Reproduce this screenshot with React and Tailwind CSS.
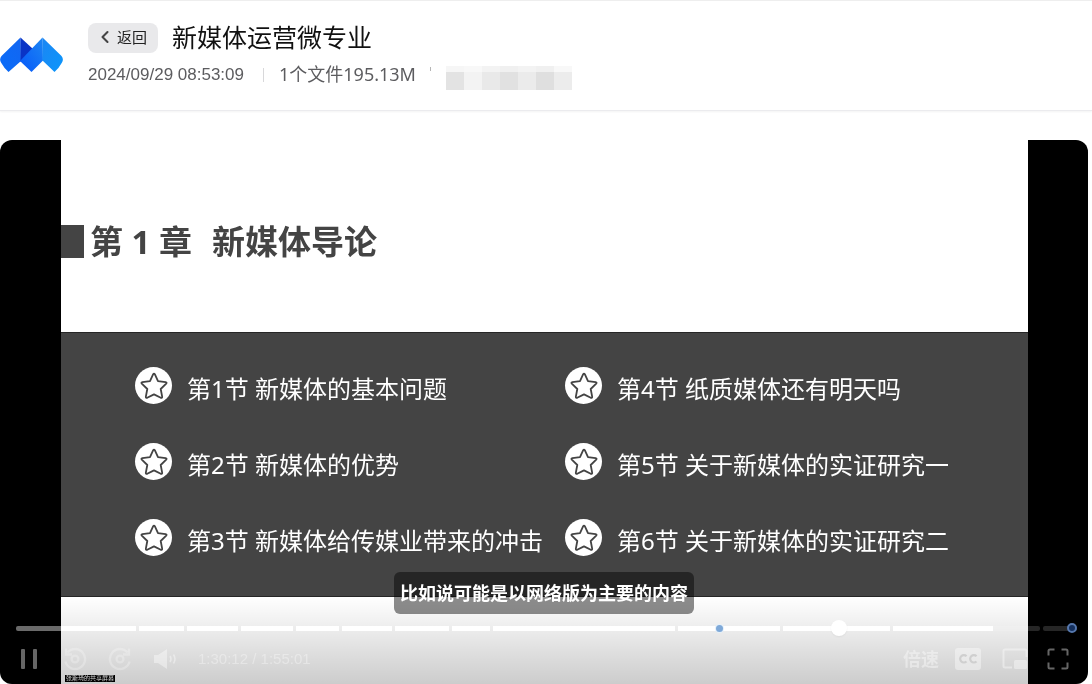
import React, { useState } from 'react';
import { ChevronLeft } from 'lucide-react';

// --- Data ---
const lessonsLeft = [
    '第1节 新媒体的基本问题',
    '第2节 新媒体的优势',
    '第3节 新媒体给传媒业带来的冲击',
];

const lessonsRight = [
    '第4节 纸质媒体还有明天吗',
    '第5节 关于新媒体的实证研究一',
    '第6节 关于新媒体的实证研究二',
];

// Chapter lengths on the seek bar, "played" is the buffered share
const chapters = [
    { size: 120, played: 100 },
    { size: 45, played: 100 },
    { size: 51, played: 100 },
    { size: 53, played: 100 },
    { size: 43, played: 100 },
    { size: 50, played: 100 },
    { size: 54, played: 100 },
    { size: 38, played: 100 },
    { size: 182, played: 100 },
    { size: 102, played: 100 },
    { size: 108, played: 100 },
    { size: 147, played: 68 },
    { size: 34, played: 0 },
];

const Logo = () => (
    <svg viewBox="0 0 63 36" className="w-[63px] h-9 shrink-0" aria-label="腾讯会议" role="img">
        <defs>
            <linearGradient id="logoLeft" x1="0" y1="1" x2="1" y2="0">
                <stop offset="0" stopColor="#0a6cf8" />
                <stop offset="1" stopColor="#1266f2" />
            </linearGradient>
            <linearGradient id="logoMid" x1="0" y1="1" x2="1" y2="0">
                <stop offset="0" stopColor="#0758fa" />
                <stop offset="1" stopColor="#1c86f3" />
            </linearGradient>
            <linearGradient id="logoRight" x1="0" y1="0" x2="1" y2="1">
                <stop offset="0" stopColor="#1c86f3" />
                <stop offset="1" stopColor="#0b96fb" />
            </linearGradient>
        </defs>
        <path d="M20.5 0.5 L1.5 19 Q-1 22 1 25.5 Q4 31 8.5 35 L21 24 Z" fill="url(#logoLeft)" />
        <path d="M20.5 0.5 L33 12 L20.5 25 Z" fill="#0a34c6" />
        <path d="M42.5 0.5 L20 24 L31.5 35 L43 23.5 Z" fill="url(#logoMid)" />
        <path d="M42.5 0.5 L61.5 19 Q64 22 62 25.5 Q59 31 54.5 35 L42.5 23.5 Z" fill="url(#logoRight)" />
    </svg>
);

const StarBadge = () => (
    <span className="w-[37px] h-[37px] rounded-full bg-white shrink-0 flex items-center justify-center">
        <svg viewBox="0 0 28 28" className="w-7 h-7" fill="none" stroke="#444" strokeWidth="1.8" strokeLinejoin="round">
            <path d="M13.2 2.2 Q14 0.9 14.8 2.2 L18 9.2 L25.6 10.1 Q27.2 10.5 26.2 11.6 L20.7 17 L22.2 24.8 Q22.2 26.4 20.8 25.8 L14 22.4 L7.2 25.8 Q5.8 26.4 5.8 24.8 L7.3 17 L1.8 11.6 Q0.8 10.5 2.4 10.1 L10 9.2 Z" />
        </svg>
    </span>
);

const LessonList = ({ lessons }) => (
    <ul className="flex flex-col gap-[39px]">
        {lessons.map((lesson) => (
            <li key={lesson} className="flex items-center gap-[15px] h-[37px]">
                <StarBadge />
                <span className="text-2xl leading-6 pt-1.5 text-white whitespace-nowrap">{lesson}</span>
            </li>
        ))}
    </ul>
);

const SkipIcon = ({ flip }) => (
    <svg viewBox="0 0 24 24" className={flip ? 'w-6 h-6 -scale-x-100' : 'w-6 h-6'} fill="none" stroke="currentColor" strokeWidth="2.4">
        <path d="M4.5 5.5 A10 10 0 1 1 2.4 14.5" />
        <path d="M3 1.5 V7.5 H9" />
        <circle cx="12" cy="12" r="3.4" />
    </svg>
);

const SeekBar = () => {
    const [position, setPosition] = useState(78);

    return (
        <div className="relative h-4 ml-4 mr-[11px] flex items-center gap-[3px]">
            {chapters.map((chapter, index) => (
                <div key={index} className="h-[5px] flex bg-white/15 rounded-xs overflow-hidden" style={{ flex: `${chapter.size} 1 0%` }}>
                    <div className="bg-[#444] mix-blend-plus-lighter" style={{ width: `${chapter.played}%` }} />
                </div>
            ))}
            <span className="absolute left-[66%] w-[7px] h-[7px] rounded-full bg-[#7fa9d8] ring-1 ring-[#e4f0fa]" />
            <span className="absolute right-0 w-2.5 h-2.5 rounded-full bg-[#142f5c] border-2 border-[#5577ad]" />
            <input
                type="range"
                aria-label="播放进度"
                min="0"
                max="100"
                value={position}
                onChange={(e) => setPosition(Number(e.target.value))}
                className="absolute inset-0 w-full appearance-none bg-transparent cursor-pointer [&::-webkit-slider-thumb]:appearance-none [&::-webkit-slider-thumb]:w-4 [&::-webkit-slider-thumb]:h-4 [&::-webkit-slider-thumb]:rounded-full [&::-webkit-slider-thumb]:bg-white [&::-webkit-slider-thumb]:shadow-xs"
            />
        </div>
    );
};

const PlayerControls = () => (
    <div className="absolute inset-x-0 bottom-0">
        <SeekBar />

        <div className="h-12 px-4 pb-0.5 flex items-center justify-between text-white/40">
            {/* Left side */}
            <div className="flex items-center text-white/25">
                <button aria-label="暂停" className="w-[26px] flex justify-center text-white/40">
                    <svg viewBox="0 0 18 20" className="w-[18px] h-5" fill="currentColor">
                        <rect x="1" y="0" width="4" height="20" rx="1" />
                        <rect x="13" y="0" width="4" height="20" rx="1" />
                    </svg>
                </button>
                <button aria-label="后退15秒" className="ml-[21px]"><SkipIcon /></button>
                <button aria-label="前进15秒" className="ml-[21px]"><SkipIcon flip /></button>
                <button aria-label="音量" className="ml-[22px] text-white/40">
                    <svg viewBox="0 0 24 24" className="w-6 h-6" fill="none" stroke="currentColor" strokeWidth="1.6">
                        <path d="M0 8 H4 L13 2 V22 L4 16 H0 Z" fill="currentColor" stroke="none" />
                        <path d="M16 9 Q18 12 16 15 M19.5 7.5 Q22.5 12 19.5 16.5" />
                    </svg>
                </button>
                <span className="ml-5 text-[15px] leading-5 text-white/35 font-[Liberation_Sans,sans-serif]">1:30:12 / 1:55:01</span>
            </div>

            {/* Right side */}
            <div className="flex items-center">
                <button className="text-lg leading-6 font-bold">倍速</button>
                <button aria-label="字幕" className="ml-[15px]">
                    <svg viewBox="0 0 28 24" className="w-7 h-6">
                        <path fillRule="evenodd" fill="currentColor" d="M4 1 H24 Q27 1 27 4 V20 Q27 23 24 23 H4 Q1 23 1 20 V4 Q1 1 4 1 Z" />
                        <path d="M12.5 9.2 A3.7 3.7 0 1 0 12.5 14.4 M22.5 9.2 A3.7 3.7 0 1 0 22.5 14.4" fill="none" stroke="#cfcfcf" strokeWidth="2.2" />
                    </svg>
                </button>
                <button aria-label="画中画" className="ml-5">
                    <svg viewBox="0 0 26 22" className="w-[26px] h-[22px]" fill="none" stroke="currentColor" strokeWidth="2">
                        <path d="M10 19.5 H3 Q1.5 19.5 1.5 18 V3 Q1.5 1.5 3 1.5 H23 Q24.5 1.5 24.5 3 V9" />
                        <rect x="12" y="12" width="13" height="9" rx="1.5" fill="currentColor" stroke="none" />
                    </svg>
                </button>
                <button aria-label="全屏" className="ml-[19px] mr-[3px]">
                    <svg viewBox="0 0 22 22" className="w-[22px] h-[22px]" fill="none" stroke="currentColor" strokeWidth="2">
                        <path d="M1.5 7.5 V3 Q1.5 1.5 3 1.5 H7.5 M14.5 1.5 H19 Q20.5 1.5 20.5 3 V7.5 M20.5 14.5 V19 Q20.5 20.5 19 20.5 H14.5 M7.5 20.5 H3 Q1.5 20.5 1.5 19 V14.5" />
                    </svg>
                </button>
            </div>
        </div>
    </div>
);

// Blurred out owner name
const MaskedName = () => (
    <div className="flex h-6 w-[126px] mt-0.5" aria-hidden="true">
        <span className="flex-1 bg-[#e3e3e3] border-t-[6px] border-[#f6f6f6]" />
        <span className="flex-1 bg-[#f3f3f3] border-t-[6px] border-[#f8f8f8]" />
        <span className="flex-1 bg-[#e9e9e9] border-t-[6px] border-[#f3f3f3]" />
        <span className="flex-1 bg-[#e1e1e1] border-t-[6px] border-[#f0f0f0]" />
        <span className="flex-1 bg-[#ebebeb] border-t-[6px] border-[#f3f3f3]" />
        <span className="flex-1 bg-[#dfdfdf] border-t-[6px] border-[#f0f0f0]" />
        <span className="flex-1 bg-[#ececec] border-t-[6px] border-[#f8f8f8]" />
    </div>
);

const App = () => {
    return (
        <div className="bg-white font-['Noto_Sans','Noto_Sans_CJK_SC',sans-serif]">

            {/* Header Area */}
            <header className="flex items-center gap-[25px] pt-[22px] pb-[23px] border-t border-t-[#eeeeee] border-b border-b-[#ebebee] shadow-xs">
                <Logo />
                <div>
                    <div className="flex items-center gap-3.5">
                        <button className="h-[30px] w-[70px] pb-0.5 rounded-lg bg-[#e9e9eb] flex items-center justify-center text-[15px] leading-5 text-[#222]">
                            <ChevronLeft className="w-5 h-5 -ml-1 mr-0.5 text-[#444]" strokeWidth={2.5} />
                            返回
                        </button>
                        <h1 className="text-[25px] leading-7 pb-0.5 text-[#111]">新媒体运营微专业</h1>
                    </div>
                    <div className="flex items-center mt-2.5 h-6 text-[#5c5c5f]">
                        <span className="text-[17px] leading-6 w-[175px] font-[Liberation_Sans,sans-serif]">2024/09/29 08:53:09</span>
                        <span className="w-px h-3.5 bg-[#d8d8da]" />
                        <span className="ml-[15px] pb-0.5 text-lg leading-6">1个文件195.13M</span>
                        <span className="ml-3.5 mb-3 w-px h-1 bg-[#b5b5b5]" />
                        <span className="ml-[15px] pt-1"><MaskedName /></span>
                    </div>
                </div>
            </header>

            {/* Player */}
            <main className="relative mt-[29px] mr-1 pr-[60px] pl-[61px] bg-black rounded-xl overflow-hidden">
                <div className="bg-white">
                    <div className="h-48 pt-[85px] flex items-start text-[#444]">
                        <span className="w-[23px] h-[33px] bg-[#444]" />
                        <h2 className="ml-1.5 flex gap-5 text-[33px] leading-[34px] font-bold">
                            <span>第 1 章</span>
                            <span>新媒体导论</span>
                        </h2>
                    </div>

                    <div className="h-[265px] pt-[34px] pl-[74px] grid grid-cols-[430px_1fr] items-start bg-[#444] border-y border-[#262626]">
                        <LessonList lessons={lessonsLeft} />
                        <LessonList lessons={lessonsRight} />
                    </div>

                    <div className="h-[87px] pl-1 pb-0.5 flex items-end">
                        <span className="bg-black text-white text-[6px] leading-[7px] px-px">张斯琦的共享屏幕</span>
                    </div>
                </div>

                <div className="absolute inset-x-0 bottom-0 h-[87px] bg-linear-to-t from-black/20 to-transparent" />

                {/* Subtitle */}
                <div className="absolute inset-x-0 bottom-[70px] flex justify-center">
                    <p className="h-[42px] px-1.5 rounded-md bg-black/45 text-white text-lg leading-[42px] font-bold">
                        比如说可能是以网络版为主要的内容
                    </p>
                </div>

                <PlayerControls />
            </main>
        </div>
    );
};

export default App;
